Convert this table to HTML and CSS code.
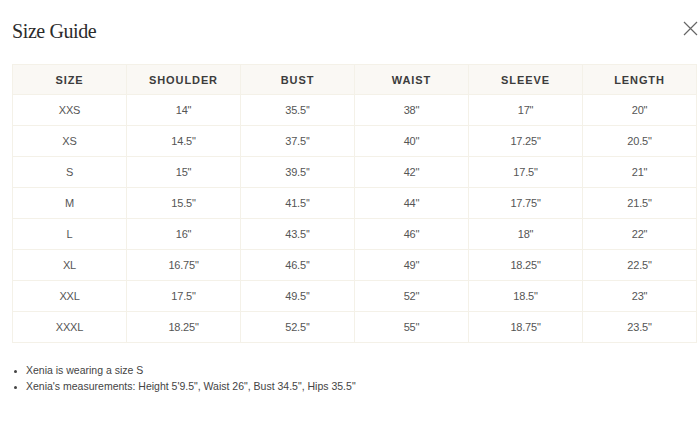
FILE: index.html
```html
<!DOCTYPE html>
<html>
<head>
<meta charset="utf-8">
<link rel="stylesheet" href="styles.css">
</head>
<body>
<div class="modal">
  <div class="head">
    <h1 class="title">Size Guide</h1>
    <button class="close" aria-label="Close">
      <svg width="15" height="15" viewBox="0 0 15 15"><path d="M1 1L14 14M14 1L1 14" stroke="#666" stroke-width="1.2" fill="none"/></svg>
    </button>
  </div>
  <table class="sizes">
    <thead>
      <tr><th>SIZE</th><th>SHOULDER</th><th>BUST</th><th>WAIST</th><th>SLEEVE</th><th>LENGTH</th></tr>
    </thead>
    <tbody>
      <tr><td>XXS</td><td>14"</td><td>35.5''</td><td>38''</td><td>17"</td><td>20"</td></tr>
      <tr><td>XS</td><td>14.5"</td><td>37.5''</td><td>40''</td><td>17.25"</td><td>20.5"</td></tr>
      <tr><td>S</td><td>15"</td><td>39.5''</td><td>42''</td><td>17.5"</td><td>21"</td></tr>
      <tr><td>M</td><td>15.5"</td><td>41.5''</td><td>44''</td><td>17.75"</td><td>21.5"</td></tr>
      <tr><td>L</td><td>16"</td><td>43.5''</td><td>46''</td><td>18"</td><td>22"</td></tr>
      <tr><td>XL</td><td>16.75"</td><td>46.5''</td><td>49''</td><td>18.25"</td><td>22.5"</td></tr>
      <tr><td>XXL</td><td>17.5"</td><td>49.5''</td><td>52''</td><td>18.5"</td><td>23"</td></tr>
      <tr><td>XXXL</td><td>18.25"</td><td>52.5''</td><td>55''</td><td>18.75"</td><td>23.5"</td></tr>
    </tbody>
  </table>
  <ul class="notes">
    <li>Xenia is wearing a size S</li>
    <li>Xenia's measurements: Height 5'9.5", Waist 26", Bust 34.5", Hips 35.5"</li>
  </ul>
</div>
</body>
</html>
```
FILE: styles.css
```css
html, body {
  margin: 0;
  padding: 0;
  background: #fff;
}
.modal {
  padding: 0 0 0 12px;
  width: 685px;
}
.head {
  display: flex;
  justify-content: space-between;
  align-items: flex-start;
  height: 64px;
}
.title {
  margin: 19px 0 0 0;
  font-family: "Liberation Serif", serif;
  font-weight: normal;
  font-size: 20px;
  line-height: 24px;
  color: #2b2b2b;
  letter-spacing: -0.4px;
}
.close {
  margin-top: 21px;
  margin-right: -1px;
  padding: 0;
  border: 0;
  background: none;
  width: 15px;
  height: 15px;
  display: flex;
}
.sizes {
  width: 685px;
  border-collapse: collapse;
  table-layout: fixed;
  font-family: "Liberation Sans", Arial, sans-serif;
}
.sizes th, .sizes td {
  border: 1px solid #f4f1e8;
  text-align: center;
  padding: 0;
}
.sizes th {
  background: #faf8f4;
  height: 29px;
  font-size: 11px;
  font-weight: bold;
  letter-spacing: 0.9px;
  color: #3c3c3c;
}
.sizes td {
  height: 30px;
  font-size: 11px;
  color: #555;
  letter-spacing: -0.2px;
}
.notes {
  margin: 19px 0 0 0;
  padding: 0 0 0 14px;
  font-family: "Liberation Sans", Arial, sans-serif;
  font-size: 10.5px;
  line-height: 16px;
  color: #444;
}
.notes li::marker {
  font-size: 9px;
}
```
